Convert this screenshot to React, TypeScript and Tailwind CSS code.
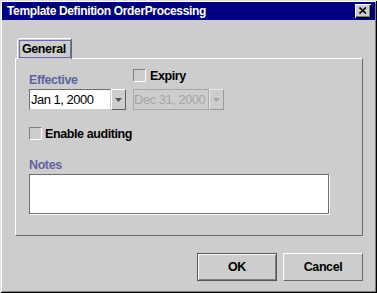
import React from "react";

function Check() {
  return (
    <div className="w-[13px] h-[13px] shrink-0 border border-t-[#808080] border-l-[#808080] border-b-white border-r-white bg-[#cdcdcd]" />
  );
}

function Arrow({ disabled }: { disabled?: boolean }) {
  return (
    <div
      className={
        disabled
          ? "w-[15px] h-[21px] shrink-0 flex items-center justify-center border border-t-[#e8e8e8] border-l-[#e8e8e8] border-r-[#9a9a9a] border-b-[#9a9a9a] bg-[#cdcdcd]"
          : "w-[15px] h-[21px] shrink-0 flex items-center justify-center border border-t-white border-l-white border-r-[#5e5e5e] border-b-[#5e5e5e] bg-[#cdcdcd]"
      }
    >
      <svg width="7" height="4" viewBox="0 0 7 4" className="mt-[1px]">
        <polygon points="0,0 7,0 3.5,4" fill={disabled ? "#a4a4a4" : "#555555"} />
      </svg>
    </div>
  );
}

export default function App() {
  return (
    <div className="w-[377px] h-[293px] bg-[#cdcdcd] flex flex-col font-['Liberation_Sans',Arial,sans-serif] shadow-[inset_1px_1px_0_#e0e0e0,inset_-1px_-1px_0_#000000,inset_2px_2px_0_#ffffff,inset_-2px_-2px_0_#808080]">
      {/* Title bar */}
      <div className="mx-[2px] mt-[2px] h-[18px] bg-[#000080] flex items-center justify-between pl-[5px] pr-[4px]">
        <span className="text-white font-bold text-[12px] leading-[14px] tracking-[-0.35px] whitespace-nowrap">
          Template Definition OrderProcessing
        </span>
        <div className="w-[16px] h-[14px] bg-[#cdcdcd] flex items-center justify-center shadow-[inset_1px_1px_0_#ffffff,inset_-1px_-1px_0_#000000,inset_-2px_-2px_0_#808080]">
          <svg width="8" height="7" viewBox="0 0 8 7" className="mb-[1px]">
            <path d="M0.5 0.5 L7 6.5 M7 0.5 L0.5 6.5" stroke="#000" strokeWidth="1.6" />
          </svg>
        </div>
      </div>

      {/* Body */}
      <div className="px-[15px] pt-[18px] flex flex-col">
        {/* Tab strip */}
        <div className="pl-[2px] flex">
          <div className="relative z-10 -mb-[1px] w-[55px] h-[21px] bg-[#cdcdcd] border-l border-t border-r border-l-white border-t-white border-r-[#6a6a6a] pl-[1px] pt-[1px] pr-0 pb-[1px] flex">
            <div className="absolute -left-[1px] -top-[1px] w-[2px] h-[2px] bg-[#cdcdcd]" />
            <div className="absolute left-0 top-0 w-[1px] h-[1px] bg-white" />
            <div className="flex-1 border border-[#6b6bab] flex items-center pl-[2px]">
              <span className="text-black font-bold text-[12.5px] leading-[14px] tracking-[-0.4px]">General</span>
            </div>
          </div>
        </div>

        {/* Panel */}
        <div className="w-[348px] h-[178px] border border-t-white border-l-white border-r-[#6a6a6a] border-b-[#6a6a6a] pl-[13px] pt-[10px] flex flex-col">
          <div className="flex">
            {/* Effective */}
            <div className="w-[97px] flex flex-col">
              <div className="mt-[4px] h-[14px] text-[#62629f] font-bold text-[12.5px] leading-[14px] tracking-[-0.4px]">
                Effective
              </div>
              <div className="mt-[2px] flex h-[21px]">
                <div className="w-[82px] h-[21px] bg-white border border-t-[#6f6f6f] border-l-[#6f6f6f] border-b-[#cfcfcf] border-r-[#cfcfcf] pl-[1px] flex items-center">
                  <span className="text-black text-[13px] leading-[15px] tracking-[-0.5px] whitespace-nowrap">Jan 1, 2000</span>
                </div>
                <Arrow />
              </div>
            </div>
            {/* Expiry */}
            <div className="ml-[7px] flex flex-col">
              <div className="flex items-center h-[13px]">
                <Check />
                <span className="ml-[4px] text-black font-bold text-[12.5px] leading-[14px] tracking-[-0.4px]">Expiry</span>
              </div>
              <div className="mt-[7px] flex h-[21px]">
                <div className="w-[76px] h-[21px] bg-[#cdcdcd] border border-[#a8a8a8] pl-[0px] flex items-center">
                  <span className="text-[#a6a6a6] text-[13px] leading-[15px] tracking-[-0.5px] whitespace-nowrap">Dec 31, 2000</span>
                </div>
                <Arrow disabled />
              </div>
            </div>
          </div>

          {/* Enable auditing */}
          <div className="mt-[17px] flex items-center h-[13px]">
            <Check />
            <span className="ml-[3px] text-black font-bold text-[12.5px] leading-[14px] tracking-[-0.4px]">Enable auditing</span>
          </div>

          {/* Notes */}
          <div className="mt-[18px] h-[14px] text-[#62629f] font-bold text-[12.5px] leading-[14px] tracking-[-0.4px]">
            Notes
          </div>
          <div className="mt-[2px] w-[300px] h-[40px] bg-white border border-[#6e6e6e] shadow-[1px_1px_0_#ffffff]" />
        </div>

        {/* Buttons */}
        <div className="mt-[17px] w-[348px] flex justify-end gap-[6px]">
          <button className="w-[80px] h-[28px] bg-[#cdcdcd] border border-[#555555] shadow-[inset_1px_1px_0_#ffffff,inset_-1px_-1px_0_#808080] flex items-center justify-center">
            <span className="text-black font-bold text-[12.5px] leading-[14px] tracking-[-0.4px]">OK</span>
          </button>
          <button className="w-[80px] h-[28px] bg-[#cdcdcd] border border-t-white border-l-white border-r-[#6a6a6a] border-b-[#6a6a6a] flex items-center justify-center">
            <span className="text-black font-bold text-[12.5px] leading-[14px] tracking-[-0.4px]">Cancel</span>
          </button>
        </div>
      </div>
    </div>
  );
}
